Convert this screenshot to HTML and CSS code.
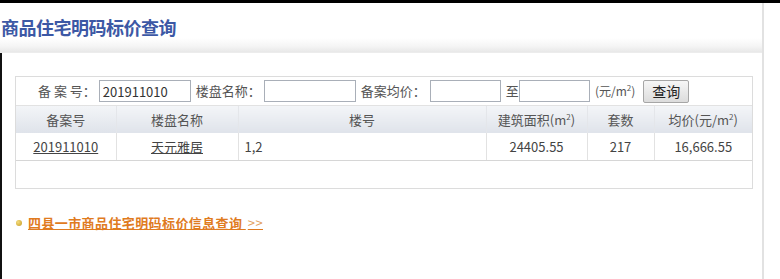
FILE: index.html
```html
<!DOCTYPE html>
<html lang="zh-CN">
<head>
<meta charset="utf-8">
<title>商品住宅明码标价查询</title>
<link rel="stylesheet" href="styles.css">
</head>
<body>
<div class="page">
  <div class="main">
    <div class="header">
      <h1 class="title">商品住宅明码标价查询</h1>
    </div>
    <div class="content">
      <div class="box">
        <form class="search">
          <label class="lbl lbl-first">备 案 号：</label>
          <input class="inp inp-no" type="text" value="201911010">
          <label class="lbl lbl-name">楼盘名称：</label>
          <input class="inp inp-name" type="text">
          <label class="lbl lbl-price">备案均价：</label>
          <input class="inp inp-min" type="text">
          <span class="lbl lbl-to">至</span>
          <input class="inp inp-max" type="text">
          <span class="lbl lbl-unit">(元/m<sup>2</sup>)</span>
          <button class="btn" type="button">查询</button>
        </form>
        <table class="grid">
          <colgroup>
            <col class="c1"><col class="c2"><col class="c3"><col class="c4"><col class="c5"><col class="c6">
          </colgroup>
          <thead>
            <tr>
              <th>备案号</th>
              <th>楼盘名称</th>
              <th>楼号</th>
              <th>建筑面积(m<sup>2</sup>)</th>
              <th>套数</th>
              <th>均价(元/m<sup>2</sup>)</th>
            </tr>
          </thead>
          <tbody>
            <tr>
              <td><a href="#">201911010</a></td>
              <td><a href="#">天元雅居</a></td>
              <td class="left">1,2</td>
              <td>24405.55</td>
              <td>217</td>
              <td>16,666.55</td>
            </tr>
          </tbody>
        </table>
        <div class="empty"></div>
      </div>
      <div class="more">
        <span class="dot"></span>
        <a class="more-link" href="#">四县一市商品住宅明码标价信息查询 <span class="arrows">&gt;&gt;</span></a>
      </div>
    </div>
  </div>
  <div class="side"></div>
</div>
</body>
</html>
```

FILE: styles.css
```css
html, body {
  margin: 0;
  padding: 0;
  background: #fff;
}
body {
  font-family: "Noto Sans CJK SC", "Microsoft YaHei", "Noto Sans", sans-serif;
  font-size: 13px;
  color: #444;
}
.page {
  display: flex;
  height: 279px;
  border-top: 3px solid #000;
  box-sizing: border-box;
  overflow: hidden;
}
.main {
  width: 764px;
  display: flex;
  flex-direction: column;
  border-right: 2px solid #e2e2e2;
  box-sizing: border-box;
}
.side {
  flex: 1;
  background: #fff;
}
.header {
  height: 50px;
  background: linear-gradient(to bottom, #fff 0, #fff 35px, #f5f5f5 43px, #e8e8e8 49px, #f0f0f0 50px);
}
.title {
  margin: 0;
  padding: 12px 0 0 1px;
  font-size: 18px;
  line-height: 24px;
  font-weight: bold;
  color: #3c58a5;
  letter-spacing: -0.5px;
}
.content {
  flex: 1;
  border-left: 2px solid #111;
  padding: 23px 0 0 13px;
}
.box {
  width: 738px;
  border: 1px solid #dcdcdc;
  box-sizing: border-box;
}
.search {
  display: flex;
  align-items: center;
  height: 28px;
  margin: 0;
  border-bottom: 1px solid #e2e2e2;
}
.lbl {
  color: #555;
  white-space: nowrap;
  line-height: 16px;
}
.lbl-first { margin-left: 22px; }
.lbl-name { margin-left: 5px; }
.lbl-price { margin-left: 5px; }
.lbl-to { margin-left: 5px; }
.lbl-unit { margin-left: 5px; font-size: 12px; }
.lbl sup, th sup { font-size: 8px; line-height: 0; }
.inp {
  height: 22px;
  box-sizing: border-box;
  border: 1px solid #a9afb8;
  padding: 1px 3px 0;
  font-family: "Noto Sans CJK SC", "Noto Sans", sans-serif;
  font-size: 13px;
  color: #333;
  background: #fff;
  outline: none;
}
.inp-no { width: 92px; margin-left: 3px; }
.inp-name { width: 92px; margin-left: 3px; }
.inp-min { width: 71px; margin-left: 4px; }
.inp-max { width: 71px; margin-left: 0; }
.btn {
  margin-left: 8px;
  width: 46px;
  height: 23px;
  padding: 0;
  border: 1px solid #a6a6a6;
  border-radius: 2px;
  background: linear-gradient(to bottom, #f6f6f6, #dcdcdc);
  font-family: "Noto Sans CJK SC", "Noto Sans", sans-serif;
  font-size: 14px;
  color: #222;
  line-height: 20px;
}
.grid {
  width: 736px;
  border-collapse: collapse;
  table-layout: fixed;
}
.c1 { width: 100px; }
.c2 { width: 122px; }
.c3 { width: 248px; }
.c4 { width: 101px; }
.c5 { width: 67px; }
.c6 { width: 98px; }
.grid th {
  height: 27px;
  padding: 0;
  font-weight: normal;
  color: #555;
  background: linear-gradient(to bottom, #f3f5f8, #dfe3ea);
  border-left: 1px solid #e4e6ea;
  text-align: center;
  font-size: 13px;
}
.grid td {
  height: 27px;
  padding: 0;
  text-align: center;
  border-left: 1px solid #e2e2e2;
  border-bottom: 1px solid #d6d6d6;
  color: #444;
  font-size: 13px;
}
.grid th:first-child, .grid td:first-child { border-left: none; }
.grid td.left {
  text-align: left;
  padding-left: 6px;
}
.grid a {
  color: #444;
  text-decoration: underline;
}
.empty {
  height: 27px;
}
.more {
  display: flex;
  align-items: center;
  margin-top: 24px;
  padding-left: 1px;
}
.dot {
  width: 6px;
  height: 6px;
  border-radius: 50%;
  background: radial-gradient(circle at 35% 35%, #f4dc7c, #c59a22);
  margin-right: 6px;
}
.more-link {
  color: #e07b1f;
  font-weight: bold;
  font-size: 13px;
  letter-spacing: 0.4px;
  text-decoration: underline;
}
.arrows {
  color: #e3a060;
  font-weight: normal;
  margin-left: 2px;
}
```
